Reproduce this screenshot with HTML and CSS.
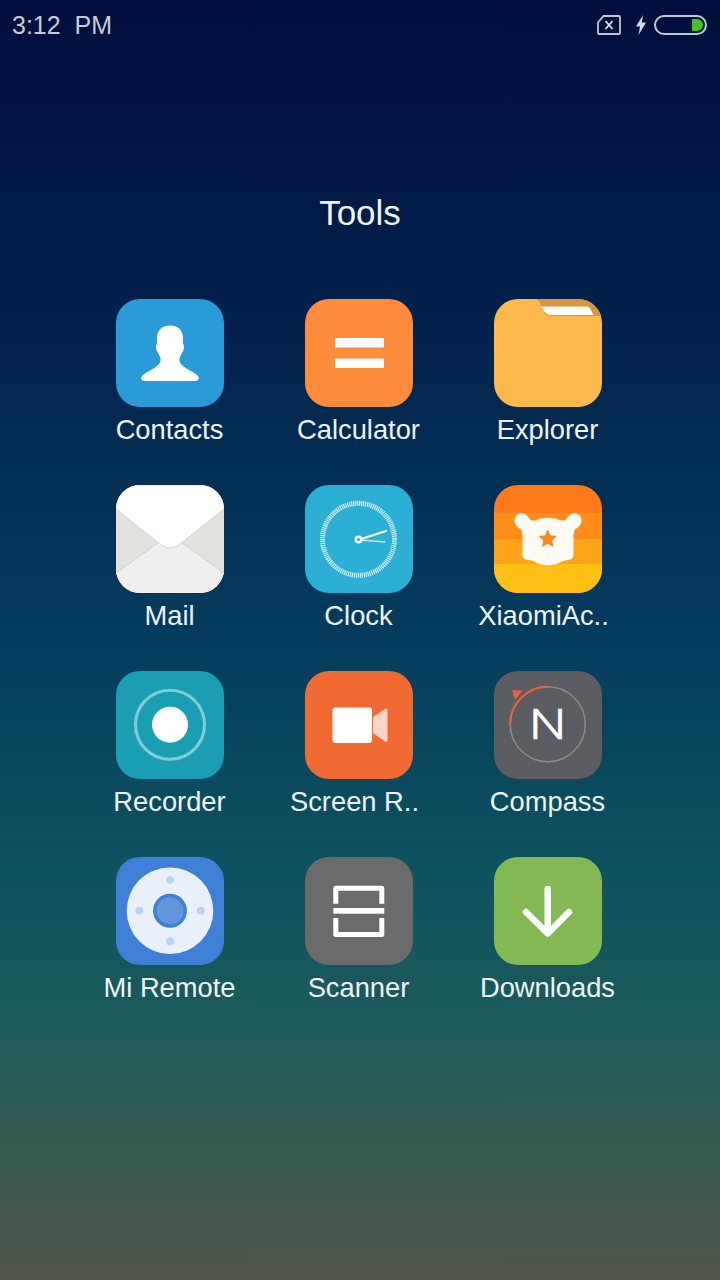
FILE: index.html
```html
<!DOCTYPE html>
<html lang="en">
<head>
    <meta charset="UTF-8">
    <meta name="viewport" content="width=device-width, initial-scale=1.0">
    <title>Tools</title>
    <link rel="stylesheet" href="styles.css">
</head>
<body>
    <div class="status-bar">
        <span class="time">3:12  PM</span>
        <div class="status-icons">
            <svg class="sim" width="24" height="20" viewBox="0 0 24 20">
                <path d="M6.500 1H22C22.600 1 23 1.400 23 2V18C23 18.600 22.600 19 22 19H2C1.400 19 1 18.600 1 18V7.500Z" fill="none" stroke="#c3c8d2" stroke-width="1.800"/>
                <path d="M8.500 6L15.500 14M15.500 6L8.500 14" stroke="#e0e3e8" stroke-width="1.800"/>
            </svg>
            <svg class="bolt" width="12" height="20" viewBox="0 0 12 20">
                <path d="M8 0L1 11.500H5L3.500 20L11 7.500H6.800Z" fill="#d5d9e0"/>
            </svg>
            <div class="battery"><div class="battery-level"></div></div>
        </div>
    </div>

    <h1 class="folder-title">Tools</h1>

    <div class="app-grid">
        <div class="app">
            <div class="icon contacts">
                <svg width="108" height="108" viewBox="0 0 108 108">
                    <path d="M54 26.500C46 26.500 41.500 31 41 38V45C39.500 46 39.500 51 42 53.500C43 56 44 58 44.500 59V62C44 65 41 67 37.500 69.500C33.500 72 29.500 73.500 26.500 76.500C24 79 25.500 82 28.500 82H79.500C82.500 82 84 79 81.500 76.500C78.500 73.500 74.500 72 70.500 69.500C67 67 64 65 63.500 62V59C64 58 65 56 66 53.500C68.500 51 68.500 46 67 45V38C66.500 31 62 26.500 54 26.500Z" fill="#fff"/>
                </svg>
            </div>
            <span class="label">Contacts</span>
        </div>
        <div class="app">
            <div class="icon calculator">
                <svg width="108" height="108" viewBox="0 0 108 108">
                    <rect x="30" y="39" width="49" height="9.500" rx="1" fill="#fff"/>
                    <rect x="30" y="59.500" width="49" height="9.500" rx="1" fill="#fff"/>
                </svg>
            </div>
            <span class="label">Calculator</span>
        </div>
        <div class="app">
            <div class="icon explorer">
                <svg width="108" height="108" viewBox="0 0 108 108">
                    <path d="M42 0H108V17H58C52 17 50 14 48 9C46 4 45 1 42 0Z" fill="#d9953f"/>
                    <path d="M47 7.500H92C95 7.500 97 10 99.500 16H57C52 16 50 12 47 7.500Z" fill="#fff"/>
                </svg>
            </div>
            <span class="label">Explorer</span>
        </div>

        <div class="app">
            <div class="icon mail">
                <svg width="108" height="108" viewBox="0 0 108 108">
                    <path d="M0 24H108V90H0Z" fill="#e1e0dd"/>
                    <path d="M0 88C12 80 30 66 42 58H66C78 66 96 80 108 88V108H0Z" fill="#f0efed"/>
                    <path d="M0 88C12 80 30 66 42 58M108 88C96 80 78 66 66 58" fill="none" stroke="#d0cfca" stroke-width="1"/>
                    <path d="M0 0H108V24L64 59C58 64 50 64 44 59L0 24Z" fill="#fff" stroke="#cfcec9" stroke-width=".8"/>
                </svg>
            </div>
            <span class="label">Mail</span>
        </div>
        <div class="app">
            <div class="icon clock">
                <svg width="108" height="108" viewBox="0 0 108 108">
                    <circle cx="53.500" cy="54.300" r="36" fill="none" stroke="#fff" stroke-opacity=".8" stroke-width="5" stroke-dasharray="1.200 .8"/>
                    <path d="M56 54L81 46" stroke="#fff" stroke-width="2.300" stroke-linecap="round"/>
                    <path d="M56 55L80 57" stroke="#fff" stroke-opacity=".7" stroke-width="1.500" stroke-linecap="round"/>
                    <circle cx="53.500" cy="54.500" r="2.800" fill="#2bafd4" stroke="#fff" stroke-width="2.500"/>
                </svg>
            </div>
            <span class="label">Clock</span>
        </div>
        <div class="app">
            <div class="icon xiaomi">
                <svg width="108" height="108" viewBox="0 0 108 108">
                    <rect y="28" width="108" height="26" fill="#ff8c17"/>
                    <rect y="54" width="108" height="25" fill="#ffa418"/>
                    <rect y="79" width="108" height="29" fill="#ffc016"/>
                    <path d="M20.500 36C20 31 24 28 28 28C31 28 33 30 35 33C37 36 38 36 42 35C49 32 59 32 66 35C70 36 71 36 73 33C75 30 77 28 80 28C84 28 88 31 87.500 36C87 40 84 43 81.500 44C80 46 79.500 48 79.500 52V70C79.500 73 77.500 74.500 74 75C70 75.500 69 76 66 77.500C58 81 50 81 42 77.500C39 76 38 75.500 34 75C30.500 74.500 28.500 73 28.500 70V52C28.500 48 28 46 26.500 44C24 43 21 40 20.500 36Z" fill="#fffaf2"/>
                    <path d="M53.700 45.500L56 50.800L61.700 51.400L57.500 55.300L58.700 61L53.700 58.100L48.700 61L49.900 55.300L45.700 51.400L51.400 50.800Z" fill="#f58a1f" stroke="#f58a1f" stroke-width="1.200" stroke-linejoin="round"/>
                </svg>
            </div>
            <span class="label shifted">XiaomiAc..</span>
        </div>

        <div class="app">
            <div class="icon recorder">
                <svg width="108" height="108" viewBox="0 0 108 108">
                    <circle cx="54" cy="53.700" r="34.500" fill="none" stroke="#7fcdd6" stroke-width="3"/>
                    <circle cx="54" cy="53.700" r="18" fill="#fff"/>
                </svg>
            </div>
            <span class="label">Recorder</span>
        </div>
        <div class="app">
            <div class="icon screen">
                <svg width="108" height="108" viewBox="0 0 108 108">
                    <rect x="27.500" y="36.500" width="39.500" height="35.500" rx="3" fill="#fff"/>
                    <path d="M68 46L80 38C81.500 37 82.500 38 82.500 39.500V69C82.500 70.500 81.500 71.500 80 70.500L68 62Z" fill="#fad5c6"/>
                </svg>
            </div>
            <span class="label shifted">Screen R..</span>
        </div>
        <div class="app">
            <div class="icon compass">
                <svg width="108" height="108" viewBox="0 0 108 108">
                    <circle cx="53.700" cy="53.300" r="37.500" fill="none" stroke="#8a8b90" stroke-width="1.500"/>
                    <path d="M16.200 53.300A37.500 37.500 0 0 1 53.700 15.800" fill="none" stroke="#ea6140" stroke-width="2"/>
                    <path d="M18.300 19.300H28.500L21 29Z" fill="#ea6140"/>
                    <text class="compass-n" x="0" y="68.500" text-anchor="middle" transform="translate(53.700 0) scale(1.250 1)">N</text>
                </svg>
            </div>
            <span class="label">Compass</span>
        </div>

        <div class="app">
            <div class="icon remote">
                <svg width="108" height="108" viewBox="0 0 108 108">
                    <circle cx="54" cy="53.700" r="43.300" fill="#e9f0fa"/>
                    <circle cx="54" cy="53.700" r="17" fill="#3f80d6"/>
                    <circle cx="54" cy="53.700" r="13.500" fill="#6296dc"/>
                    <circle cx="54" cy="23" r="4" fill="#b8d3f3"/>
                    <circle cx="54" cy="84.400" r="4" fill="#b8d3f3"/>
                    <circle cx="23.300" cy="53.700" r="4" fill="#b8d3f3"/>
                    <circle cx="84.700" cy="53.700" r="4" fill="#b8d3f3"/>
                </svg>
            </div>
            <span class="label">Mi Remote</span>
        </div>
        <div class="app">
            <div class="icon scanner">
                <svg width="108" height="108" viewBox="0 0 108 108">
                    <path d="M30.800 46.700V31.200H76.800V46.700" fill="none" stroke="#fff" stroke-width="5" stroke-linejoin="round"/>
                    <path d="M30.800 61V77.500H76.800V61" fill="none" stroke="#fff" stroke-width="5" stroke-linejoin="round"/>
                    <rect x="28.300" y="51" width="51" height="5.700" fill="#fff"/>
                </svg>
            </div>
            <span class="label">Scanner</span>
        </div>
        <div class="app">
            <div class="icon downloads">
                <svg width="108" height="108" viewBox="0 0 108 108">
                    <path d="M53.700 32V76M32 55L53.700 76.500L75 55" fill="none" stroke="#fff" stroke-width="6.500" stroke-linecap="round" stroke-linejoin="round"/>
                </svg>
            </div>
            <span class="label">Downloads</span>
        </div>
    </div>
</body>
</html>
```

FILE: styles.css
```css
body {
    width: 720px;
    height: 1280px;
    margin: 0;
    overflow: hidden;
    color: #edf5f7;
    font-family: "Liberation Sans", Arial, sans-serif;
    background: linear-gradient(180deg, #010e3c 0%, #02214c 25%, #043a5c 48%, #0f5260 68%, #1c5a5b 80%, #37594f 90%, #50564a 100%);
}
.status-bar {
    display: flex;
    justify-content: space-between;
    align-items: center;
    height: 50px;
    padding: 0 13px 0 12px;
}
.time {
    color: #c6ccd6;
    font-size: 25px;
    white-space: pre;
}
.status-icons {
    display: flex;
    align-items: center;
}
.sim {
    margin-right: 14px;
}
.bolt {
    margin-right: 7px;
}
.battery {
    display: flex;
    justify-content: flex-end;
    align-items: center;
    box-sizing: border-box;
    width: 53px;
    height: 20px;
    padding-right: 2px;
    border: 2px solid #c3c8d2;
    border-radius: 10px;
}
.battery-level {
    width: 11px;
    height: 12px;
    border-radius: 1px 6px 6px 1px;
    background-color: #44c41c;
}
.folder-title {
    margin: 143px 0 66px;
    font-size: 35px;
    font-weight: normal;
    line-height: 40px;
    text-align: center;
}
.app-grid {
    display: grid;
    grid-template-columns: repeat(3, 189px);
    row-gap: 37px;
    padding-left: 75px;
}
.app {
    display: flex;
    flex-direction: column;
    align-items: center;
}
.icon {
    width: 108px;
    height: 108px;
    overflow: hidden;
    border-radius: 24px;
}
.icon svg {
    display: block;
}
.label {
    margin-top: 5px;
    font-size: 27.300px;
    line-height: 36px;
    white-space: pre;
}
.shifted {
    padding-right: 8px;
}
.contacts { background-color: #2a9ad9; }
.calculator { background-color: #fe8c3a; }
.explorer { background-color: #fdb94c; }
.mail { background-color: #fff; }
.clock { background-color: #2bafd4; }
.xiaomi { background-color: #ff7a1a; }
.recorder { background-color: #1a9fb2; }
.screen { background-color: #f26a33; }
.compass { background-color: #5c5d63; }
.remote { background-color: #3f80d6; }
.scanner { background-color: #6b6b6b; }
.downloads { background-color: #84b854; }
.compass-n {
    fill: #fff;
    stroke: #fff;
    stroke-width: .5;
    font-family: Roboto, "Liberation Sans", sans-serif;
    font-size: 42px;
    font-weight: 300;
}
```
